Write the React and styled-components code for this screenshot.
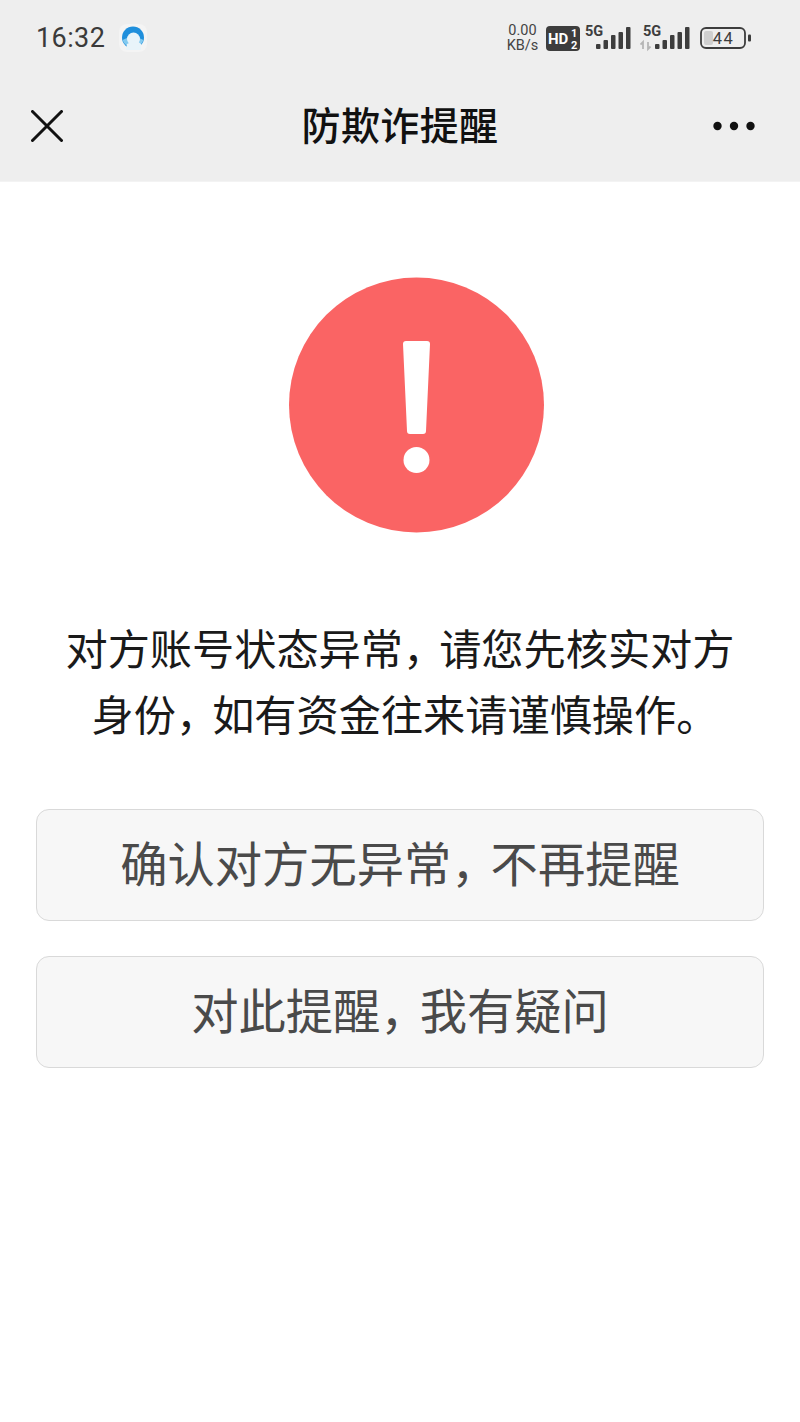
import React from 'react';
import styled, { createGlobalStyle } from 'styled-components';

const Global = createGlobalStyle`
  html, body { margin: 0; padding: 0; background: #fff; }
  body { font-family: "Noto Sans CJK SC", "Noto Sans", sans-serif; }
`;
const Page = styled.div`
  width: 800px; height: 1422px; display: flex; flex-direction: column; background: #fff; overflow: hidden;
`;
const Header = styled.header`
  height: 182px; flex: none; background: #eeeeee; display: flex; flex-direction: column; border-bottom: 1px solid #f3f3f3; box-sizing: border-box;
`;
const StatusBar = styled.div`
  height: 76px; flex: none; display: flex; align-items: center; justify-content: space-between; padding: 0 48px 0 36px;
`;
const StatusLeft = styled.div`
  display: flex; align-items: center; gap: 14px;
`;
const Time = styled.span`
  font-family: Roboto, "Liberation Sans", sans-serif; font-size: 27px; letter-spacing: 0.4px; color: #3a3a3a; line-height: 1;
`;
const StatusRight = styled.div`
  display: flex; align-items: center;
`;
const Speed = styled.div`
  width: 31px; display: flex; flex-direction: column; align-items: center; font-family: Roboto, "Liberation Sans", sans-serif; font-size: 14.5px; line-height: 15px; color: #444; margin-right: 8px;
`;
const StatusItem = styled.span`
  display: flex; margin-right: ${(p) => p.$gap}px;
`;
const Nav = styled.nav`
  flex: 1; display: grid; grid-template-columns: 1fr auto 1fr; align-items: center; padding: 0 31px 5px;
`;
const NavEnd = styled.div`
  display: flex; justify-content: ${(p) => p.$align}; padding-right: ${(p) => p.$inset || 0}px;
`;
const Title = styled.h1`
  margin: 0 0 5px; font-size: 39px; font-weight: 500; color: #111; line-height: 1; letter-spacing: 0.4px;
`;
const Main = styled.main`
  flex: 1; display: flex; flex-direction: column; align-items: center; padding: 95px 36px 0;
`;
const AlertIcon = styled.svg`
  width: 255px; height: 256px; margin-left: 32px; flex: none; display: block;
`;
const Message = styled.p`
  margin: 81px 0 0; width: 700px; text-align: center; font-size: 42.2px; line-height: 66px; color: #1a1a1a; font-weight: 400;
`;
const Line = styled.span`
  display: block; padding-left: ${(p) => p.$shift || 0}px;
`;
const Comma = styled.span`
  letter-spacing: ${(p) => p.$tight}px;
`;
const Buttons = styled.div`
  align-self: stretch; display: flex; flex-direction: column; gap: 35px; margin-top: 63px;
`;
const ActionButton = styled.button`
  height: 112px; width: 100%; box-sizing: border-box; border: 1.5px solid #d9d9d9; border-radius: 13px; background: #f7f7f7; color: #4a4a4a; font-family: inherit; font-size: 47.3px; font-weight: 400; padding: 0 0 6px; line-height: 1;
`;

const AppBadge = () => (
  <svg width="28" height="28" viewBox="0 0 28 28">
    <rect width="28" height="28" rx="8" fill="#f4f4f4" />
    <circle cx="14" cy="13.5" r="11" fill="#1f8fdc" />
    <path d="M3.5 16a11 11 0 0 0 21 0 L20 14 L8 14Z" fill="#82caf0" />
    <circle cx="14.5" cy="15" r="6.5" fill="#e8f4fa" />
    <path d="M7 26h15v-6l-5-4-9 4z" fill="#e8f4fa" />
  </svg>
);
const HdBadge = () => (
  <svg width="34" height="25" viewBox="0 0 34 25">
    <rect width="34" height="25" rx="4" fill="#3d3d3d" />
    <text x="2" y="18" fontFamily="Roboto, Liberation Sans, sans-serif" fontWeight="700" fontSize="15" fill="#fff">HD</text>
    <text x="25" y="10.5" fontFamily="Roboto, Liberation Sans, sans-serif" fontWeight="700" fontSize="11" fill="#fff">1</text>
    <text x="25" y="23" fontFamily="Roboto, Liberation Sans, sans-serif" fontWeight="700" fontSize="11" fill="#fff">2</text>
  </svg>
);
const Signal = ({ arrows }) => {
  const start = arrows ? 15 : 11;
  const heights = [5, 9, 14, 17, 22];
  return (
    <svg width={arrows ? 50 : 46} height="32" viewBox={`0 0 ${arrows ? 50 : 46} 32`}>
      <text x={arrows ? 3 : 0} y="14" fontFamily="Roboto, Liberation Sans, sans-serif" fontWeight="700" fontSize="14.5" fill="#3d3d3d">5G</text>
      {arrows && <path d="M3 27v-7l-2.500 2.500M8 20v7l2.500-2.500" stroke="#b5b5b5" strokeWidth="1.800" fill="none" />}
      {heights.map((h, i) => (
        <rect key={h} x={start + i * 7.5} y={27 - h} width="4.500" height={h} rx="1" fill="#3d3d3d" />
      ))}
    </svg>
  );
};
const Battery = () => (
  <svg width="52" height="24" viewBox="0 0 52 24">
    <rect x="1" y="2" width="44" height="20" rx="5" fill="none" stroke="#3d3d3d" strokeWidth="1.800" />
    <rect x="4" y="5" width="9" height="14" rx="2" fill="#cfcfcf" />
    <rect x="48" y="8.500" width="3" height="7" rx="1" fill="#3d3d3d" />
    <text x="23.500" y="18" textAnchor="middle" fontFamily="Roboto, Liberation Sans, sans-serif" fontSize="16.500" letterSpacing="1.500" fill="#3d3d3d">44</text>
  </svg>
);
const CloseIcon = () => (
  <svg width="32" height="32" viewBox="0 0 32 32">
    <path d="M1.500 1.500L30.500 30.500M30.500 1.500L1.500 30.500" stroke="#111" strokeWidth="3" strokeLinecap="round" />
  </svg>
);
const MoreIcon = () => (
  <svg width="42" height="10" viewBox="0 0 42 10">
    <circle cx="4.500" cy="5" r="4.200" fill="#111" />
    <circle cx="21" cy="5" r="4.200" fill="#111" />
    <circle cx="37.500" cy="5" r="4.200" fill="#111" />
  </svg>
);

export default function App() {
  return (
    <Page>
      <Global />
      <Header>
        <StatusBar>
          <StatusLeft>
            <Time>16:32</Time>
            <AppBadge />
          </StatusLeft>
          <StatusRight>
            <Speed><span>0.00</span><span>KB/s</span></Speed>
            <StatusItem $gap={5}><HdBadge /></StatusItem>
            <StatusItem $gap={9}><Signal /></StatusItem>
            <StatusItem $gap={10}><Signal arrows /></StatusItem>
            <Battery />
          </StatusRight>
        </StatusBar>
        <Nav>
          <NavEnd $align="flex-start"><CloseIcon /></NavEnd>
          <Title>防欺诈提醒</Title>
          <NavEnd $align="flex-end" $inset={14}><MoreIcon /></NavEnd>
        </Nav>
      </Header>
      <Main>
        <AlertIcon viewBox="0 0 255 256">
          <circle cx="127.500" cy="128" r="127.500" fill="#fa6464" />
          <path d="M117 64h21a3 3 0 0 1 3 3l-4 87a3 3 0 0 1-3 3h-13a3 3 0 0 1-3-3l-4-87a3 3 0 0 1 3-3z" fill="#fff" />
          <circle cx="127.500" cy="183" r="13" fill="#fff" />
        </AlertIcon>
        <Message>
          <Line>对方账号状态异常<Comma $tight={-6}>，</Comma>请您先核实对方</Line>
          <Line $shift={10}>身份<Comma $tight={-6}>，</Comma>如有资金往来请谨慎操作。</Line>
        </Message>
        <Buttons>
          <ActionButton>确认对方无异常<Comma $tight={-8}>，</Comma>不再提醒</ActionButton>
          <ActionButton>对此提醒<Comma $tight={-8}>，</Comma>我有疑问</ActionButton>
        </Buttons>
      </Main>
    </Page>
  );
}
